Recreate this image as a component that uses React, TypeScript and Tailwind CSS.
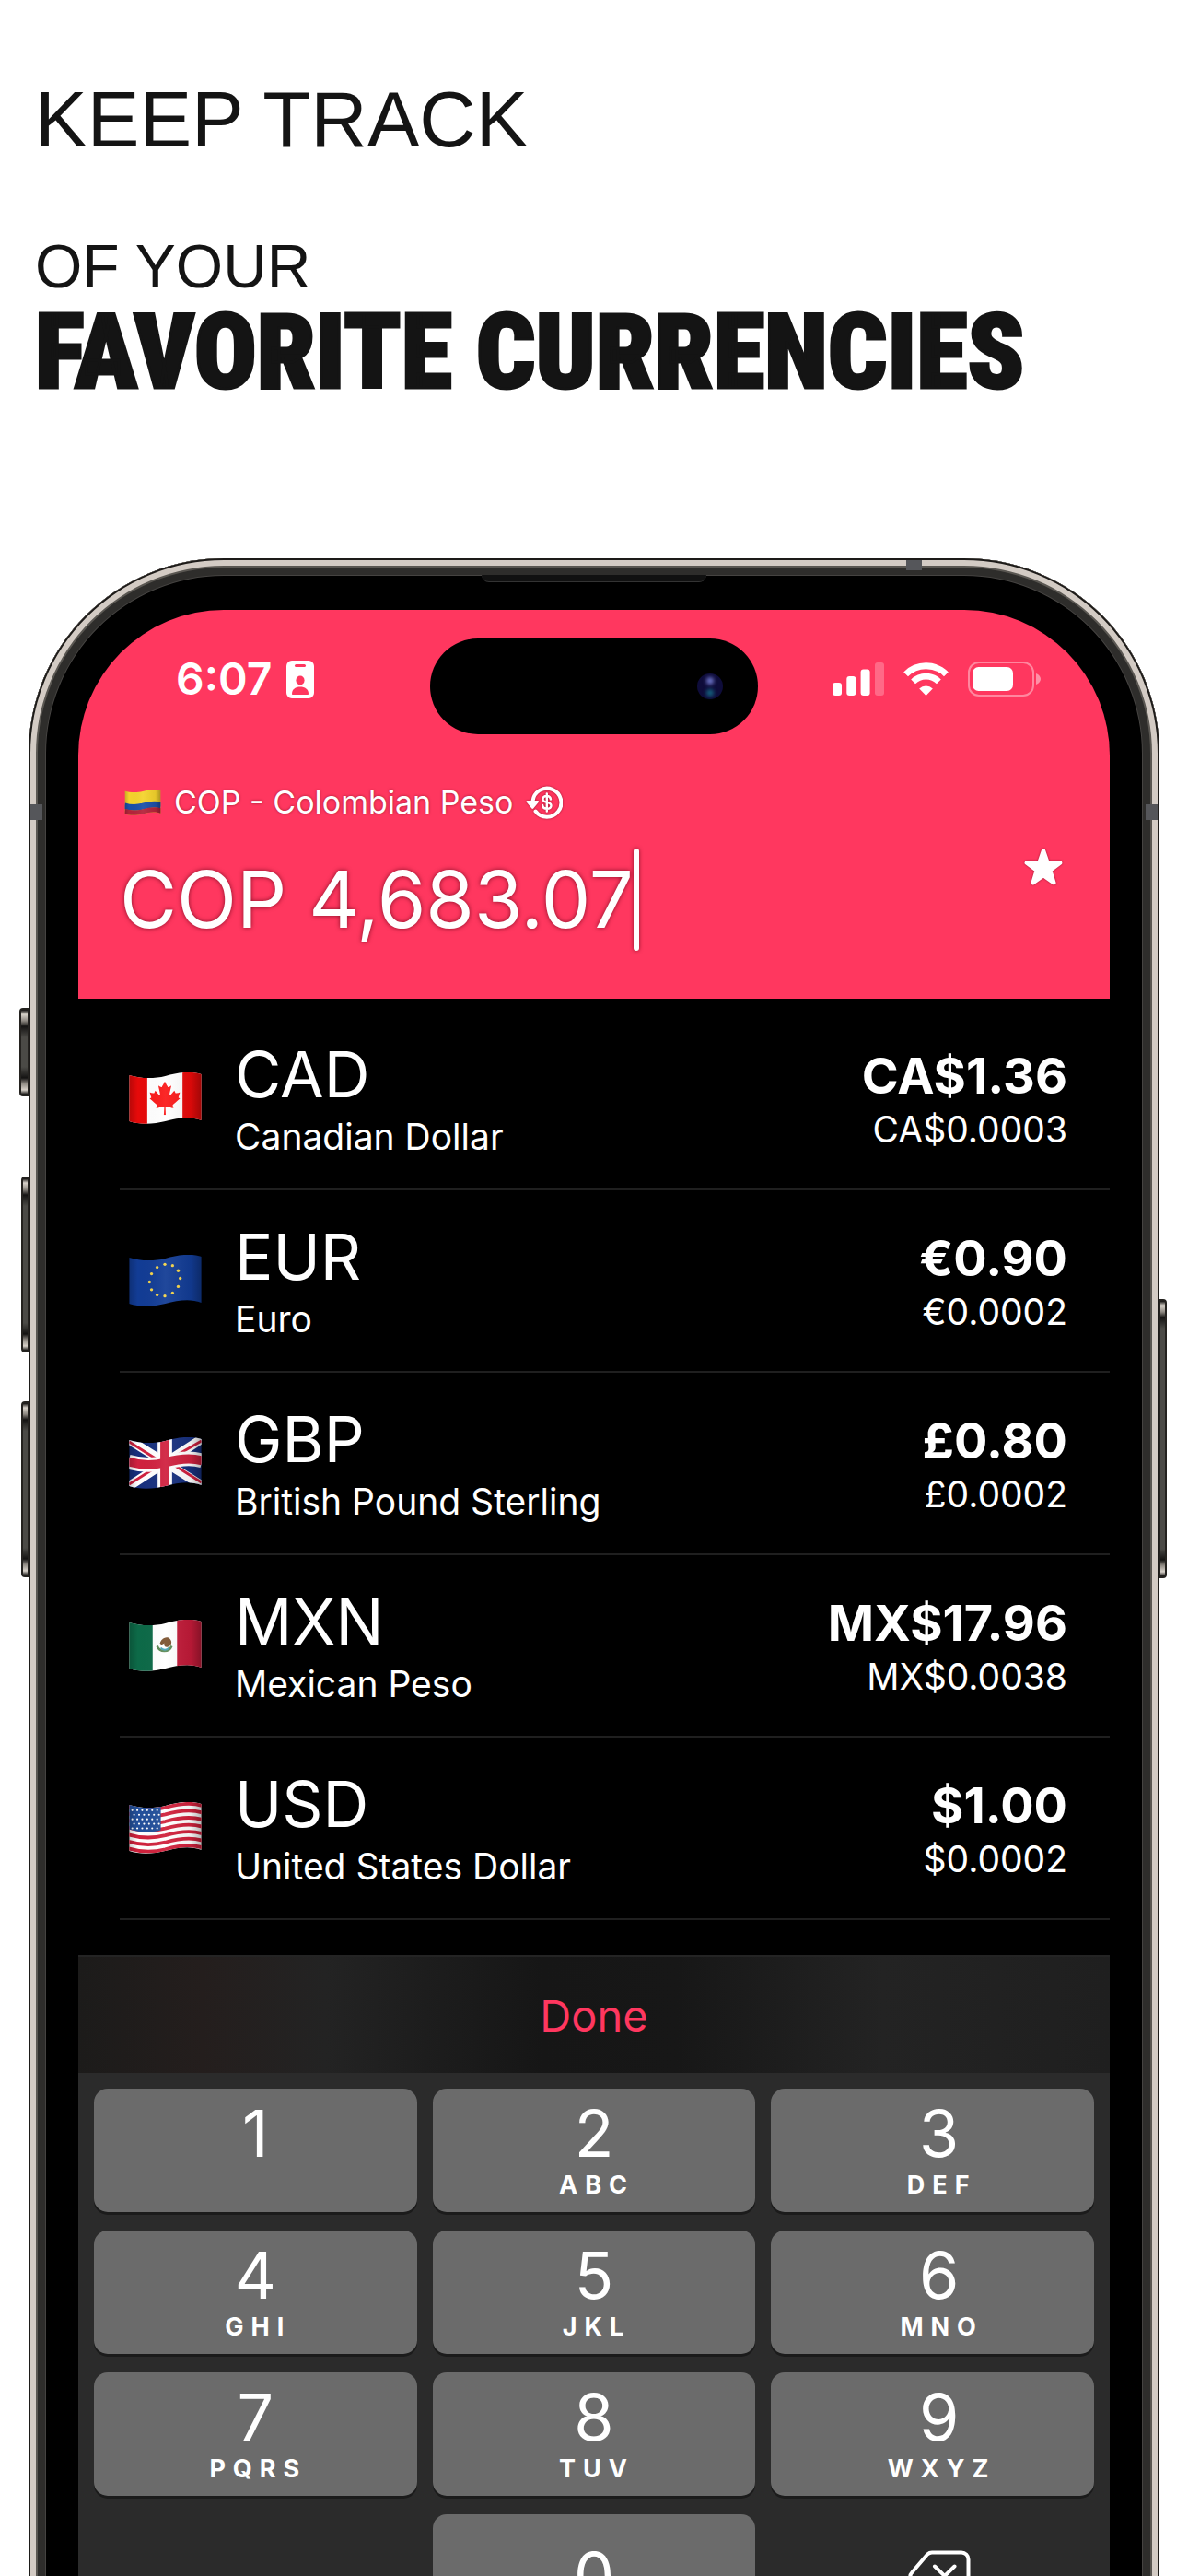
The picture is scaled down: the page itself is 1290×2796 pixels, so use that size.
import { useState } from "react";
import type { ReactNode } from "react";
import { FaCanadianMapleLeaf } from "react-icons/fa";

type Currency = {
  code: string;
  name: string;
  total: string;
  rate: string;
};

const currencies: Currency[] = [
  { code: "CAD", name: "Canadian Dollar", total: "CA$1.36", rate: "CA$0.0003" },
  { code: "EUR", name: "Euro", total: "€0.90", rate: "€0.0002" },
  { code: "GBP", name: "British Pound Sterling", total: "£0.80", rate: "£0.0002" },
  { code: "MXN", name: "Mexican Peso", total: "MX$17.96", rate: "MX$0.0038" },
  { code: "USD", name: "United States Dollar", total: "$1.00", rate: "$0.0002" },
];

const keys = [
  { digit: "1", letters: "" },
  { digit: "2", letters: "ABC" },
  { digit: "3", letters: "DEF" },
  { digit: "4", letters: "GHI" },
  { digit: "5", letters: "JKL" },
  { digit: "6", letters: "MNO" },
  { digit: "7", letters: "PQRS" },
  { digit: "8", letters: "TUV" },
  { digit: "9", letters: "WXYZ" },
];

/* ---------- flags ---------- */

// a horizontal line that follows the wave of the flag
const wave = (y: number) =>
  `M-1 ${y + 3} C12 ${y + 7} 28 ${y + 7} 40 ${y + 4} C54 ${y} 68 ${y - 2} 81 ${y + 2}`;

const flagArt: Record<string, ReactNode> = {
  CAD: (
    <>
      <rect width="80" height="58" fill="#fff" />
      <rect width="20" height="58" fill="#e60a0a" />
      <rect x="59" width="21" height="58" fill="#e60a0a" />
      <FaCanadianMapleLeaf x={21} y={10} size={37} color="#fb1a1a" />
    </>
  ),
  EUR: (
    <>
      <rect width="80" height="58" fill="#123c95" />
      {Array.from({ length: 12 }, (_, i) => {
        const a = (i * Math.PI) / 6;
        return (
          <circle
            key={i}
            cx={39.5 + Math.cos(a) * 17}
            cy={28 - Math.cos(a) * 2 + Math.sin(a) * 17.5}
            r="1.7"
            fill="#f3d34a"
          />
        );
      })}
    </>
  ),
  GBP: (
    <>
      <rect width="80" height="58" fill="#17307e" />
      <path d="M0 3L80 53M0 54L80 2" stroke="#fff" strokeWidth="10" />
      <path d="M0 5L38 29M42 26L80 50M0 52L38 28M42 26L80 4" stroke="#d0213f" strokeWidth="3" />
      <path d={wave(24)} fill="none" stroke="#fff" strokeWidth="16" />
      <path d="M39.5 0V58" stroke="#fff" strokeWidth="16" />
      <path d={wave(24)} fill="none" stroke="#d0213f" strokeWidth="10" />
      <path d="M39.5 0V58" stroke="#d0213f" strokeWidth="10" />
    </>
  ),
  MXN: (
    <>
      <rect width="80" height="58" fill="#fff" />
      <rect width="26" height="58" fill="#0d6a48" />
      <rect x="53" width="27" height="58" fill="#c01a38" />
      <path d="M31 29a8.500 8.500 0 0 0 16 0" fill="none" stroke="#5d8a56" strokeWidth="2.500" />
      <path d="M35 31c2 3 7 3 9 0" fill="none" stroke="#4aa3b5" strokeWidth="2" />
      <path d="M34 26c2-6 8-8 11-5c3 3 2 8-2 9c-3 1-5-1-4-4c-2 2-4 2-5 0z" fill="#7c5330" />
    </>
  ),
  USD: (
    <>
      <rect width="80" height="58" fill="#fff" />
      {[0, 1, 2, 3, 4, 5, 6].map((i) => (
        <path key={i} d={wave(2 + i * 7.7)} fill="none" stroke="#d0213c" strokeWidth="3.900" />
      ))}
      <path d="M0 2C12 7 24 7 35 5V31C24 34 12 34 0 30Z" fill="#23509b" />
      {Array.from({ length: 30 }, (_, i) => (
        <circle
          key={i}
          cx={3.5 + (i % 6) * 5.5 + (Math.floor(i / 6) % 2) * 2}
          cy={9 + Math.floor(i / 6) * 5}
          r="1.100"
          fill="#fff"
        />
      ))}
    </>
  ),
  COP: (
    <>
      <rect width="80" height="58" fill="#f4d32c" />
      <path d={wave(33)} fill="none" stroke="#1c4fa8" strokeWidth="14" />
      <path d={wave(47)} fill="none" stroke="#b5233a" strokeWidth="15" />
    </>
  ),
};

const Flag = ({ code, className }: { code: string; className: string }) => (
  <svg viewBox="0 0 80 57" className={className} role="img" aria-label={`${code} flag`}>
    <defs>
      <clipPath id={`wave-${code}`}>
        <path d="M0 3C12 7 28 7 40 4C54 0 68 -2 80 2V53C68 48 54 50 40 54C28 57 12 58 0 54Z" />
      </clipPath>
      <linearGradient id={`shade-${code}`}>
        <stop offset="0" stopColor="#000" stopOpacity="0.2" />
        <stop offset="0.12" stopColor="#000" stopOpacity="0" />
        <stop offset="0.5" stopColor="#fff" stopOpacity="0.060" />
        <stop offset="0.85" stopColor="#000" stopOpacity="0.060" />
        <stop offset="1" stopColor="#000" stopOpacity="0.300" />
      </linearGradient>
    </defs>
    <g clipPath={`url(#wave-${code})`}>
      {flagArt[code]}
      <rect width="80" height="58" fill={`url(#shade-${code})`} />
    </g>
  </svg>
);

/* ---------- icons ---------- */

const IdCardIcon = () => (
  <svg viewBox="0 0 30 41" className="h-[41px] w-[30px]" aria-hidden="true">
    <rect width="30" height="41" rx="6" fill="#fff" />
    <rect x="9" y="4" width="12" height="3" rx="1.500" fill="#ff375f" />
    <ellipse cx="15" cy="21.500" rx="4.600" ry="5" fill="#ff375f" />
    <path d="M6 36c0-5 4-7.500 9-7.500s9 2.500 9 7.500c0 .6-.4 1-1 1H7c-.6 0-1-.4-1-1z" fill="#ff375f" />
  </svg>
);

const SignalIcon = () => (
  <svg viewBox="0 0 56 36" className="h-9 w-14" fill="#fff" aria-hidden="true">
    <rect y="22" width="10" height="14" rx="3" />
    <rect x="15.300" y="15" width="10" height="21" rx="3" />
    <rect x="30.600" y="7.500" width="10" height="28.500" rx="3" />
    <rect x="46" width="10" height="36" rx="3" opacity="0.250" />
  </svg>
);

const WifiIcon = () => (
  <svg viewBox="0 0 49 36" className="h-9 w-[49px]" aria-hidden="true">
    <g fill="none" stroke="#fff" strokeWidth="6.800">
      <path d="M2.600 12.800a31 31 0 0 1 43.800 0" />
      <path d="M10.600 20.800a19.700 19.700 0 0 1 27.800 0" />
    </g>
    <path d="M24.500 36l-7.300-7.500a10.500 10.500 0 0 1 14.600 0z" fill="#fff" />
  </svg>
);

const BatteryIcon = () => (
  <svg viewBox="0 0 79 38" className="h-[38px] w-[79px]" aria-hidden="true">
    <rect x="1" y="1" width="70" height="36" rx="11" fill="none" stroke="#fff" strokeOpacity="0.400" strokeWidth="2" />
    <rect x="5" y="6" width="44" height="26" rx="6.500" fill="#fff" />
    <path d="M74 13c3 1 5 3.500 5 6s-2 5-5 6z" fill="#fff" opacity="0.450" />
  </svg>
);

const RevertIcon = () => (
  <svg viewBox="0 0 40 38" className="h-[38px] w-10 drop-shadow-[0_0_1px_rgba(90,0,20,0.6)]" aria-hidden="true">
    <path d="M7.500 17.500A15.500 15.500 0 1 1 10.500 28.500" fill="none" stroke="#fff" strokeWidth="4" strokeLinecap="round" />
    <path d="M1.500 17h11.500c1 0 1.400 1 .8 1.800l-5.600 6.700c-.5.600-1.300.6-1.800 0L.8 18.800c-.6-.8-.3-1.800.7-1.800z" fill="#fff" />
    <path
      d="M27 15.500c-.3-2.300-2-3.500-4.200-3.500c-2.500 0-4.300 1.300-4.300 3.400c0 4.700 9 2.100 9 6.900c0 2.200-1.900 3.500-4.600 3.500s-4.500-1.300-4.800-3.800M22.800 9.500v19"
      fill="none"
      stroke="#fff"
      strokeWidth="2.400"
      strokeLinecap="round"
    />
  </svg>
);

const StarIcon = () => (
  <svg viewBox="0 0 44 42" className="h-[42px] w-11 drop-shadow-[0_0_1px_rgba(90,0,20,0.6)]" aria-hidden="true">
    <path
      d="M22 3.500L26.400 16.200L40.200 16.500L29.200 24.700L33.300 38.200L22 30.200L10.700 38.200L14.800 24.700L3.800 16.500L17.600 16.200Z"
      fill="#fff"
      stroke="#fff"
      strokeWidth="4.500"
      strokeLinejoin="round"
    />
  </svg>
);

const BackspaceIcon = () => (
  <svg viewBox="0 0 68 56" className="h-14 w-[68px]" fill="none" stroke="#fff" strokeWidth="4" strokeLinecap="round" strokeLinejoin="round" aria-hidden="true">
    <path d="M26 2.500H58a7.500 7.500 0 0 1 7.500 7.500V46a7.500 7.500 0 0 1-7.500 7.500H26c-2 0-3.500-.7-5-2L4 31.500c-2-2.200-2-4.800 0-7L21 4.500c1.500-1.300 3-2 5-2z" />
    <path d="M29 17.500L50.500 38.500M50.500 17.500L29 38.500" />
  </svg>
);

/* ---------- phone hardware ---------- */

const SideButton = ({ className }: { className: string }) => (
  <span
    className={`absolute border-2 border-[#24221f] bg-[linear-gradient(#0c0b0a,#d8d2ca_5px,#8d8881_12px,#141312_18px,#4b4a46_30px,#4b4a46_calc(100%-30px),#141312_calc(100%-18px),#8d8881_calc(100%-12px),#d8d2ca_calc(100%-5px),#0c0b0a)] ${className}`}
  />
);

const PhoneHardware = () => (
  <div aria-hidden="true">
    <SideButton className="top-[488px] -left-[10px] h-24 w-[11px] rounded-l-[4px]" />
    <SideButton className="top-[671px] -left-2 h-[191px] w-[9px] rounded-l-[4px]" />
    <SideButton className="top-[915px] -left-2 h-[191px] w-[9px] rounded-l-[4px]" />
    <SideButton className="top-[804px] -right-2 h-[303px] w-[9px] rounded-r-[4px]" />
    {/* antenna bands */}
    <span className="absolute top-[267px] left-[2px] h-[17px] w-[13px] bg-[#55565a]" />
    <span className="absolute top-[267px] right-[2px] h-[17px] w-[13px] bg-[#55565a]" />
    <span className="absolute top-[2px] right-[258px] h-[11px] w-[17px] bg-[#55565a]" />
    {/* earpiece */}
    <span className="absolute top-[18px] left-1/2 h-2 w-[244px] -translate-x-1/2 rounded-b-lg border-b border-[#333] bg-[#111]" />
  </div>
);

/* ---------- screen ---------- */

const StatusBar = () => (
  <div className="grid grid-cols-[1fr_356px_1fr] pt-[31px] text-white">
    <div className="flex items-center gap-4 pb-4 pl-[106px]">
      <span className="text-[48px] leading-none font-semibold">6:07</span>
      <IdCardIcon />
    </div>
    <div className="flex h-[104px] items-center justify-end rounded-full bg-black pr-[38px]">
      <span className="flex h-7 w-7 flex-col items-center justify-center gap-[5px] rounded-full bg-[#0e0c3a]">
        <span className="h-2 w-2 rounded-full bg-[#6d74c8] blur-[2px]" />
        <span className="h-2 w-2 rounded-full bg-[#15607e] blur-[2px]" />
      </span>
    </div>
    <div className="flex items-center justify-end gap-[21px] pr-[75px] pb-4">
      <SignalIcon />
      <WifiIcon />
      <BatteryIcon />
    </div>
  </div>
);

const Header = () => {
  const [amount, setAmount] = useState("COP 4,683.07");

  return (
    <header className="bg-[#ff375f] pb-[52px] text-white">
      <StatusBar />
      <div className="mt-[52px] flex items-center justify-between pr-[50px] pl-[45px]">
        <div className="flex flex-col gap-7">
          <div className="flex h-11 items-center gap-[14px] pl-[5px]">
            <Flag code="COP" className="h-7 w-10" />
            <label htmlFor="amount" className="text-[34px] leading-none [text-shadow:0_0_3px_rgba(90,0,20,0.6)]">
              COP - Colombian Peso
            </label>
            <button type="button" aria-label="Revert to last currency">
              <RevertIcon />
            </button>
          </div>
          <div className="flex items-center">
            <input
              id="amount"
              value={amount}
              onChange={(e) => setAmount(e.target.value)}
              className="field-sizing-content h-[111px] bg-transparent text-[85px] outline-none [text-shadow:0_0_5px_rgba(90,0,20,0.75)]"
            />
            <span className="h-[111px] w-[6px] rounded-full bg-white shadow-[0_0_4px_rgba(90,0,20,0.7)]" />
          </div>
        </div>
        <button type="button" aria-label="Favorite">
          <StarIcon />
        </button>
      </div>
    </header>
  );
};

const CurrencyRow = ({ currency }: { currency: Currency }) => (
  <li className="flex h-[198px] items-center gap-9 border-b-2 border-[#1f1f1f] pr-[46px] pl-[10px]">
    <Flag code={currency.code} className="h-14 w-[79px]" />
    <div className="flex flex-1 flex-col pt-2">
      <span className="text-[69px] leading-[76px]">{currency.code}</span>
      <span className="text-[39px] leading-[60px]">{currency.name}</span>
    </div>
    <div className="flex flex-col pt-1 text-right">
      <span className="text-[54px] leading-[64px] font-bold">{currency.total}</span>
      <span className="text-[39px] leading-[52px]">{currency.rate}</span>
    </div>
  </li>
);

const keyStyle =
  "flex h-[134px] flex-col items-center justify-center rounded-[15px] bg-[#6b6b6b] shadow-[0_3px_0_#1b1b1b]";

const Keypad = () => (
  <div className="mt-[38px] bg-[#2b2b2b] text-white">
    <div className="flex h-32 items-center justify-center border-t-2 border-[#242424] bg-[linear-gradient(90deg,#1c1b1a,#241e1d_12%,#232323_24%,#161616_45%,#171717_58%,#232323_78%,#1f1f1f)]">
      <button type="button" className="text-[47px] leading-none text-[#ff375f]">
        Done
      </button>
    </div>
    <div className="grid grid-cols-3 gap-x-[17px] gap-y-5 px-[17px] pt-[17px] pb-5">
      {keys.map(({ digit, letters }) => (
        <button key={digit} type="button" className={`${keyStyle} nth-[3n]:pl-[14px]`}>
          <span className="text-[70px] leading-[76px]">{digit}</span>
          <span className="h-9 pl-[6px] text-[27px] leading-9 font-bold tracking-[8px]">{letters}</span>
        </button>
      ))}
      <span />
      <button type="button" className={keyStyle}>
        <span className="text-[70px] leading-[76px]">0</span>
      </button>
      <button type="button" aria-label="Delete" className="flex items-center justify-center pl-[14px]">
        <BackspaceIcon />
      </button>
    </div>
  </div>
);

const Phone = () => (
  <div className="relative mx-[31px] mt-[167px] rounded-t-[212px] bg-black px-[54px] pt-[56px] shadow-[inset_0_0_0_2px_#1d1b19,inset_0_0_0_8px_#d3cbc4,inset_0_0_0_10px_#5a5752,inset_0_0_0_18px_#2e2d2b,inset_0_0_0_19px_#454341]">
    <PhoneHardware />
    <main className="overflow-hidden rounded-t-[158px] bg-black text-white">
      <Header />
      <ul className="pt-[10px] pl-[45px]">
        {currencies.map((currency) => (
          <CurrencyRow key={currency.code} currency={currency} />
        ))}
      </ul>
      <Keypad />
    </main>
  </div>
);

const App = () => {
  return (
    <div className="h-screen overflow-hidden bg-white pt-20 font-['Inter',sans-serif]">
      <h1 className="flex flex-col pl-[38px] text-[#141414]">
        <span className="font-['Liberation_Sans',sans-serif] text-[85px] leading-[100px]">KEEP TRACK</span>
        <span className="mt-[71px] font-['Liberation_Sans',sans-serif] text-[66px] leading-[76px]">OF YOUR</span>
        <span className="font-['Roboto_Condensed',sans-serif] text-[113px] leading-[112px] font-black whitespace-nowrap [-webkit-text-stroke:3px_#141414]">
          FAVORITE CURRENCIES
        </span>
      </h1>
      <Phone />
    </div>
  );
};

export default App;
